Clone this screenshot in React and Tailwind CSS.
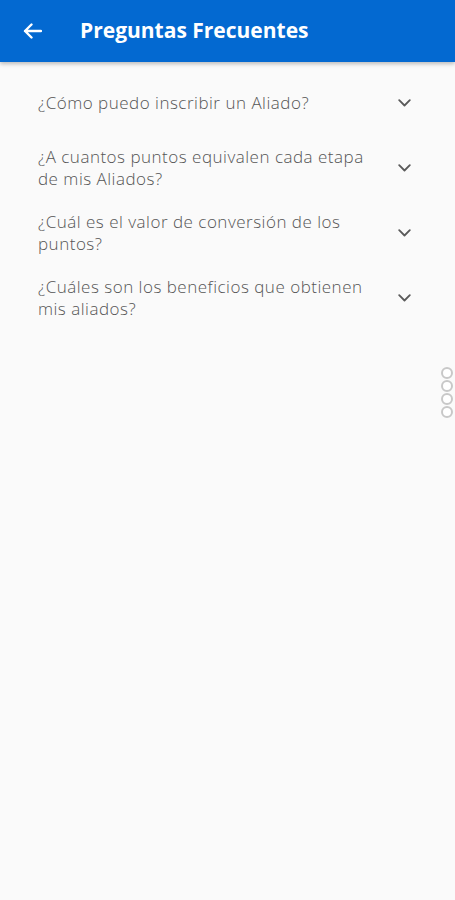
import React, { useState } from "react";

const faqs = [
  "¿Cómo puedo inscribir un Aliado?",
  "¿A cuantos puntos equivalen cada etapa de mis Aliados?",
  "¿Cuál es el valor de conversión de los puntos?",
  "¿Cuáles son los beneficios que obtienen mis aliados?",
];

const Chevron = () => (
  <svg width="13" height="8" viewBox="0 0 13 8" fill="none">
    <path d="M1.2 1.2 L6.5 6.5 L11.8 1.2" stroke="#5a5a5a" strokeWidth="1.8" strokeLinecap="round" strokeLinejoin="round" />
  </svg>
);

const App = () => {
  const [open, setOpen] = useState(null);

  return (
    <div
      className="relative min-h-[900px] w-full bg-[#fafafa]"
      style={{ fontFamily: "'Open Sans', Lato, sans-serif" }}
    >
      {/* Header */}
      <div className="flex h-[62px] items-center bg-[#0369d1] shadow-[0_2px_4px_rgba(0,0,0,0.25)]">
        <button className="ml-[22px] flex h-[20px] w-[20px] items-center justify-center">
          <svg width="19" height="16" viewBox="0 0 19 16" fill="none">
            <path d="M18 8 H2 M8.5 1.5 L2 8 L8.5 14.5" stroke="white" strokeWidth="2.4" strokeLinecap="round" strokeLinejoin="round" />
          </svg>
        </button>
        <h1 className="ml-[38px] text-[21px] font-bold text-white">
          Preguntas Frecuentes
        </h1>
      </div>

      {/* Questions */}
      <div className="pt-[8px]">
        {faqs.map((q, i) => (
          <button
            key={i}
            onClick={() => setOpen(open === i ? null : i)}
            className="flex min-h-[65px] w-full items-center pl-[38px] pr-[44px] text-left"
          >
            <span className="flex-1 pr-[26px] text-[17px] font-light leading-[22px] tracking-[0.5px] text-[#555555]">
              {q}
            </span>
            <Chevron />
          </button>
        ))}
      </div>

      {/* Side dots */}
      <div className="absolute right-[2px] top-[367px] flex flex-col gap-[1px]">
        {[0, 1, 2, 3].map((d) => (
          <div key={d} className="h-[12px] w-[12px] rounded-full border-[2px] border-[#c8c8c8] bg-white" />
        ))}
      </div>
    </div>
  );
};

export default App;
